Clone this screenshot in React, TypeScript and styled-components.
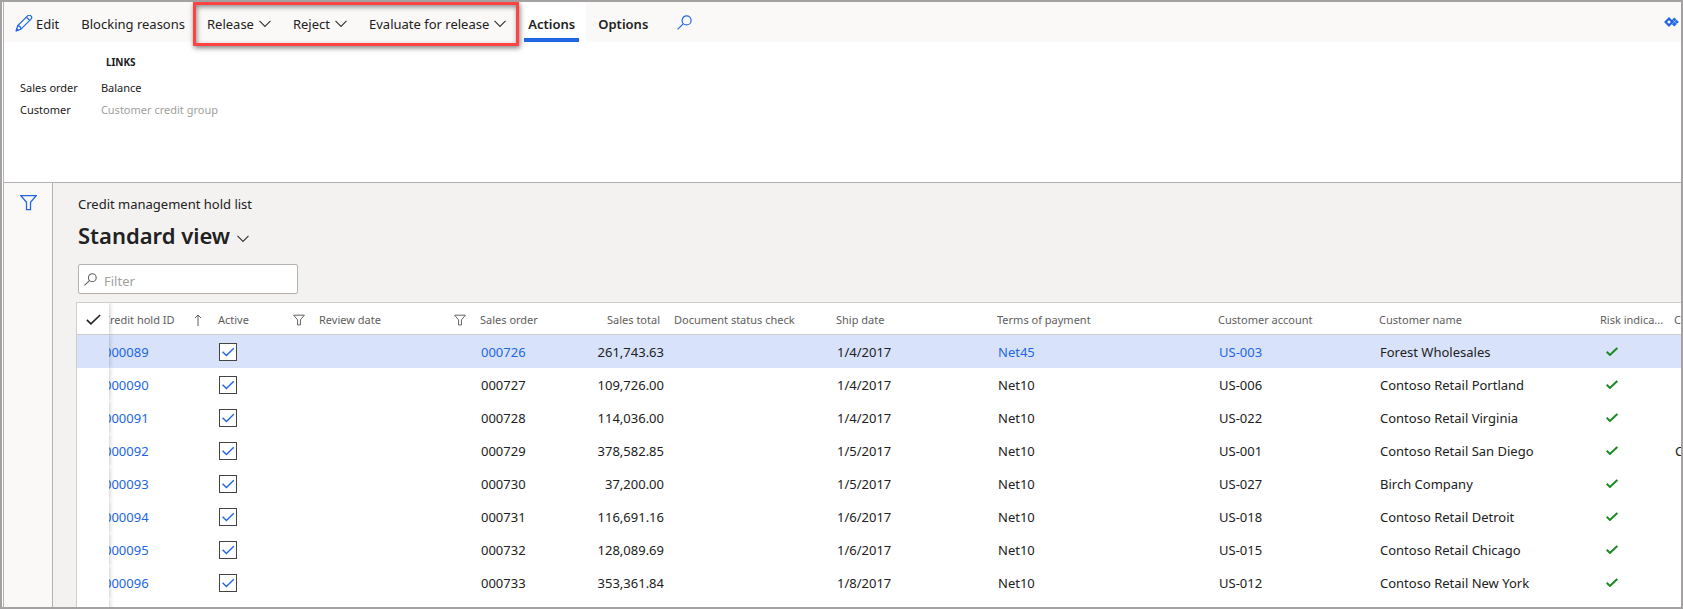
import React from 'react';
import styled, { createGlobalStyle, css } from 'styled-components';

const BLUE = '#2266e3';

const GlobalStyle = createGlobalStyle`
  *, *::before, *::after { box-sizing: border-box; }
  body {
    margin: 0;
    overflow: hidden;
    background: #fff;
    color: #212121;
    font-family: "Noto Sans", "Open Sans", sans-serif;
    font-size: 13px;
    line-height: 20px;
  }
  button, input { font: inherit; color: inherit; }
`;

const Frame = styled.div`
  height: 100vh;
  display: flex;
  flex-direction: column;
  overflow: hidden;
  border: 2px solid #a3a1a1;
  padding-left: 1px;
`;

const Page = styled.div`
  flex: 1;
  min-height: 0;
  display: flex;
  flex-direction: column;
  border-left: 1px solid #b5b1af;
`;

const Toolbar = styled.header`
  display: flex;
  height: 40px;
  flex: none;
  background: #faf9f8;
`;

const Command = styled.button<{ $gap?: number }>`
  display: flex;
  align-items: center;
  gap: ${(p) => p.$gap ?? 3}px;
  padding: 4px 11px 0;
  border: 0;
  background: none;
  white-space: nowrap;
  cursor: pointer;
`;

const Highlight = styled.div`
  position: relative;
  display: flex;
  padding-right: 2px;
  &::after {
    content: '';
    position: absolute;
    inset: 0 0 -4px -3px;
    border: 3px solid #ff4343;
    box-shadow: 1px 2px 5px rgba(0, 0, 0, 0.5), inset 1px 2px 5px rgba(0, 0, 0, 0.45);
    pointer-events: none;
  }
`;

const Tab = styled.button<{ $active?: boolean }>`
  display: flex;
  align-items: stretch;
  padding: 0 7px 0 5px;
  border: 0;
  font-weight: 600;
  background: ${(p) => (p.$active ? '#fff' : 'none')};
  cursor: pointer;
  & + & {
    margin-left: 3px;
  }
  span {
    display: flex;
    align-items: center;
    padding: 4px 4px 0;
    ${(p) => p.$active && css`
      padding-bottom: 4px;
      padding-top: 8px;
      box-shadow: inset 0 -4px ${BLUE};
    `}
  }
`;

const SearchButton = styled.button`
  display: flex;
  align-items: center;
  padding: 0 18px;
  border: 0;
  background: none;
  cursor: pointer;
`;

const Spacer = styled.div`
  flex: 1;
`;

const CornerButton = styled.button`
  display: flex;
  align-items: center;
  padding: 0 2px;
  border: 0;
  background: none;
`;

const Panel = styled.nav`
  display: flex;
  flex: none;
  height: 141px;
  gap: 23px;
  padding: 10px 16px;
  border-bottom: 1px solid #b5b1af;
  font-size: 11px;
  line-height: 22px;
`;

const PanelGroup = styled.div`
  display: flex;
  flex-direction: column;
`;

const PanelTitle = styled.h2`
  margin: 0 0 5px;
  height: 20px;
  padding-left: 5px;
  font-size: 10px;
  line-height: 20px;
  font-weight: 700;
`;

const PanelLink = styled.a<{ $disabled?: boolean }>`
  color: ${(p) => (p.$disabled ? '#a19f9d' : 'inherit')};
  text-decoration: none;
`;

const Body = styled.div`
  flex: 1;
  min-height: 0;
  display: flex;
`;

const SideBar = styled.aside`
  flex: none;
  width: 49px;
  padding: 11px 16px;
  background: #faf9f8;
  border-right: 1px solid #b5b1af;
`;

const IconButton = styled.button`
  display: flex;
  padding: 0;
  border: 0;
  background: none;
`;

const Main = styled.main`
  flex: 1;
  min-width: 0;
  display: flex;
  flex-direction: column;
  background: #f3f2f1;
  padding: 11px 0 0 23px;
`;

const Caption = styled.div`
  padding-left: 2px;
`;

const ViewButton = styled.button`
  display: flex;
  align-items: center;
  gap: 7px;
  margin: 5px 0 0 2px;
  padding: 0;
  border: 0;
  background: none;
  h1 {
    margin: 0;
    font-size: 22px;
    line-height: 32px;
    font-weight: 600;
  }
  svg {
    margin-top: 8px;
  }
`;

const FilterBox = styled.label`
  display: flex;
  align-items: center;
  gap: 7px;
  width: 220px;
  height: 30px;
  margin: 13px 0 8px 2px;
  padding: 0 5px;
  border: 1px solid #b5b1af;
  border-radius: 2px;
  background: #fff;
  input {
    flex: 1;
    min-width: 0;
    padding: 4px 0 0;
    border: 0;
    outline: 0;
    background: none;
  }
  input::placeholder {
    color: #a19f9d;
    opacity: 1;
  }
`;

const Grid = styled.div`
  flex: 1;
  min-height: 0;
  overflow: hidden;
  border: 1px solid #cfcdcb;
  border-width: 1px 0 0 1px;
  background: #fff;
`;

const Table = styled.table`
  width: 100%;
  table-layout: fixed;
  border-collapse: separate;
  border-spacing: 0;
`;

const HeadCell = styled.th<{ $right?: boolean; $scrolled?: boolean }>`
  height: 32px;
  padding: ${(p) => (p.$right ? '2px 8px 0 0' : '2px 8px 0 6px')};
  border-bottom: 1px solid #cfcdcb;
  overflow: hidden;
  color: #605e5c;
  font-size: 11px;
  font-weight: 400;
  text-align: ${(p) => (p.$right ? 'right' : 'left')};
  white-space: nowrap;
  ${(p) => p.$scrolled && css`
    padding-left: 0;
    padding-right: 10px;
    text-indent: -6px;
  `}
`;

const HeadLabel = styled.div`
  display: flex;
  align-items: center;
  justify-content: space-between;
`;

/* The pinned column casts its shadow only over the columns to its right. */
const pinned = css`
  position: relative;
  z-index: 1;
  box-shadow: 1px 0 4px rgba(0, 0, 0, 0.2);
  clip-path: inset(0 -6px 0 0);
`;

const SelectHead = styled(HeadCell)`
  ${pinned}
  padding: 2px 0 0 9px;
  overflow: visible;
  svg { display: block; }
`;

const Row = styled.tr<{ $selected?: boolean }>`
  background: ${(p) => (p.$selected ? '#d8e3fb' : '#fff')};
`;

const Cell = styled.td<{ $right?: boolean; $scrolled?: boolean; $icon?: boolean }>`
  height: 33px;
  padding: ${(p) => (p.$right ? '0 4px 0 0' : '0 0 0 7px')};
  overflow: hidden;
  text-align: ${(p) => (p.$right ? 'right' : 'left')};
  white-space: nowrap;
  ${(p) => p.$scrolled && css`
    padding-left: 0;
    text-indent: -5px;
  `}
  ${(p) => p.$icon && css`
    padding: 0 0 0 12px;
    svg { display: block; }
  `}
`;

const SelectCell = styled.td`
  ${pinned}
  padding: 0;
`;

const CellLink = styled.a`
  color: ${BLUE};
  text-decoration: none;
`;

const Tick = styled.span`
  display: grid;
  width: 18px;
  height: 18px;
  input {
    appearance: none;
    grid-area: 1 / 1;
    width: 18px;
    height: 18px;
    margin: 0;
    border: 1px solid #444;
    background: #fff;
  }
  svg {
    grid-area: 1 / 1;
    pointer-events: none;
  }
`;

const Chevron = () => (
  <svg width="12" height="8" viewBox="0 0 12 8" fill="none" stroke="#333" strokeWidth="1.1">
    <path d="M0.5 0.8 L6 6.5 L11.5 0.8" />
  </svg>
);

const Pencil = () => (
  <svg width="18" height="18" viewBox="0 0 18 18" fill="none" stroke={BLUE} strokeWidth="1.2" strokeLinejoin="round">
    <path d="M1.2 15.8 L2.6 10.8 L12.6 0.9 C13.5 0 15 0 15.9 0.9 C16.9 1.9 16.9 3.3 16 4.2 L6 14.2 Z" />
    <path d="M11.4 2.1 L14.8 5.5 M2.8 10.9 C4.6 11 5.8 12.2 6 14" />
    <path d="M1.2 15.8 L1.8 13.6 L3.3 15.2 Z" fill={BLUE} />
  </svg>
);

const Search = ({ color, size }: { color: string; size: number }) => (
  <svg width={size} height={size} viewBox="0 0 15 15" fill="none" stroke={color} strokeWidth="1.2">
    <circle cx="9.6" cy="5.4" r="4.5" />
    <path d="M6.4 8.6 L0.6 14.4" />
  </svg>
);

const Funnel = ({ color, size, width }: { color: string; size: number; width: number }) => (
  <svg width={size} height={size} viewBox="0 0 16 16" fill="none" stroke={color} strokeWidth={width}>
    <path d="M0.8 1.6 H15.2 L9.9 7.8 V14.6 H6.1 V7.8 Z" />
  </svg>
);

const Check = ({ color, width, height, weight }: { color: string; width: number; height: number; weight: number }) => (
  <svg width={width} height={height} viewBox="0 0 14 10" fill="none" stroke={color} strokeWidth={weight}>
    <path d="M0.8 5.4 L4.6 9 L13.2 0.8" />
  </svg>
);

const SortArrow = () => (
  <svg width="8" height="12" viewBox="0 0 8 12" fill="none" stroke="#605e5c">
    <path d="M4 12 V1 M1 4 L4 1 L7 4" />
  </svg>
);

const Diamonds = () => (
  <svg width="15" height="10" viewBox="0 0 15 10">
    <path d="M10.2 0.4 L14.8 5 L10.2 9.6 L5.6 5 Z" fill={BLUE} />
    <path d="M8.4 2.6 L13 7.2 M12.6 2.6 L8 7.2" stroke="#a9c4f6" strokeWidth="0.8" />
    <path d="M5 1.6 L8.2 5 L5 8.4 L1.6 5 Z" fill="#fff" stroke={BLUE} strokeWidth="2.2" />
  </svg>
);

const COLUMNS = [32, 103, 101, 161, 100, 94, 162, 161, 221, 161, 221, 74];

const ROWS = [
  ['000089', '000726', '261,743.63', '1/4/2017', 'Net45', 'US-003', 'Forest Wholesales', ''],
  ['000090', '000727', '109,726.00', '1/4/2017', 'Net10', 'US-006', 'Contoso Retail Portland', ''],
  ['000091', '000728', '114,036.00', '1/4/2017', 'Net10', 'US-022', 'Contoso Retail Virginia', ''],
  ['000092', '000729', '378,582.85', '1/5/2017', 'Net10', 'US-001', 'Contoso Retail San Diego', 'C'],
  ['000093', '000730', '37,200.00', '1/5/2017', 'Net10', 'US-027', 'Birch Company', ''],
  ['000094', '000731', '116,691.16', '1/6/2017', 'Net10', 'US-018', 'Contoso Retail Detroit', ''],
  ['000095', '000732', '128,089.69', '1/6/2017', 'Net10', 'US-015', 'Contoso Retail Chicago', ''],
  ['000096', '000733', '353,361.84', '1/8/2017', 'Net10', 'US-012', 'Contoso Retail New York', ''],
];

const ActiveTick = ({ label }: { label: string }) => (
  <Tick>
    <input type="checkbox" defaultChecked aria-label={label} />
    <svg width="18" height="18" viewBox="0 0 18 18" fill="none" stroke={BLUE} strokeWidth="1.4">
      <path d="M3.6 8.8 L7.4 12.6 L14.8 5.2" />
    </svg>
  </Tick>
);

export default function App() {
  return (
    <Frame>
      <GlobalStyle />
      <Page>
        <Toolbar>
          <Command><Pencil />Edit</Command>
          <Command>Blocking reasons</Command>
          <Highlight>
            <Command $gap={5}>Release<Chevron /></Command>
            <Command $gap={5}>Reject<Chevron /></Command>
            <Command $gap={5}>Evaluate for release<Chevron /></Command>
          </Highlight>
          <Tab $active><span>Actions</span></Tab>
          <Tab><span>Options</span></Tab>
          <SearchButton aria-label="Search"><Search color={BLUE} size={15} /></SearchButton>
          <Spacer />
          <CornerButton aria-label="Apps"><Diamonds /></CornerButton>
        </Toolbar>
        <Panel>
          <PanelGroup>
            <PanelTitle />
            <PanelLink href="#">Sales order</PanelLink>
            <PanelLink href="#">Customer</PanelLink>
          </PanelGroup>
          <PanelGroup>
            <PanelTitle>LINKS</PanelTitle>
            <PanelLink href="#">Balance</PanelLink>
            <PanelLink href="#" $disabled>Customer credit group</PanelLink>
          </PanelGroup>
        </Panel>
        <Body>
          <SideBar>
            <IconButton aria-label="Show filters"><Funnel color={BLUE} size={17} width={1.2} /></IconButton>
          </SideBar>
          <Main>
            <Caption>Credit management hold list</Caption>
            <ViewButton><h1>Standard view</h1><Chevron /></ViewButton>
            <FilterBox>
              <Search color="#605e5c" size={13} />
              <input type="text" placeholder="Filter" aria-label="Filter" />
            </FilterBox>
            <Grid>
              <Table>
                <colgroup>
                  {COLUMNS.map((w, i) => <col key={i} width={w} />)}
                  <col />
                </colgroup>
                <thead>
                  <tr>
                    <SelectHead aria-label="Select"><Check color="#222" width={15} height={11} weight={1.5} /></SelectHead>
                    <HeadCell $scrolled><HeadLabel>Credit hold ID<SortArrow /></HeadLabel></HeadCell>
                    <HeadCell><HeadLabel>Active<Funnel color="#605e5c" size={12} width={1.3} /></HeadLabel></HeadCell>
                    <HeadCell><HeadLabel>Review date<Funnel color="#605e5c" size={12} width={1.3} /></HeadLabel></HeadCell>
                    <HeadCell>Sales order</HeadCell>
                    <HeadCell $right>Sales total</HeadCell>
                    <HeadCell>Document status check</HeadCell>
                    <HeadCell>Ship date</HeadCell>
                    <HeadCell>Terms of payment</HeadCell>
                    <HeadCell>Customer account</HeadCell>
                    <HeadCell>Customer name</HeadCell>
                    <HeadCell>Risk indica...</HeadCell>
                    <HeadCell>C</HeadCell>
                  </tr>
                </thead>
                <tbody>
                  {ROWS.map(([id, order, total, ship, terms, account, name, extra], i) => {
                    const link = (text: string) => (i === 0 ? <CellLink href="#">{text}</CellLink> : text);
                    return (
                      <Row key={id} $selected={i === 0}>
                        <SelectCell />
                        <Cell $scrolled><CellLink href="#">{id}</CellLink></Cell>
                        <Cell><ActiveTick label={`Active ${id}`} /></Cell>
                        <Cell />
                        <Cell>{link(order)}</Cell>
                        <Cell $right>{total}</Cell>
                        <Cell />
                        <Cell>{ship}</Cell>
                        <Cell>{link(terms)}</Cell>
                        <Cell>{link(account)}</Cell>
                        <Cell>{name}</Cell>
                        <Cell $icon><Check color="#1e8a24" width={12} height={9} weight={2.4} /></Cell>
                        <Cell>{extra}</Cell>
                      </Row>
                    );
                  })}
                  <Row>
                    <SelectCell />
                    <Cell />
                    <Cell><ActiveTick label="Active" /></Cell>
                    <Cell colSpan={10} />
                  </Row>
                </tbody>
              </Table>
            </Grid>
          </Main>
        </Body>
      </Page>
    </Frame>
  );
}
